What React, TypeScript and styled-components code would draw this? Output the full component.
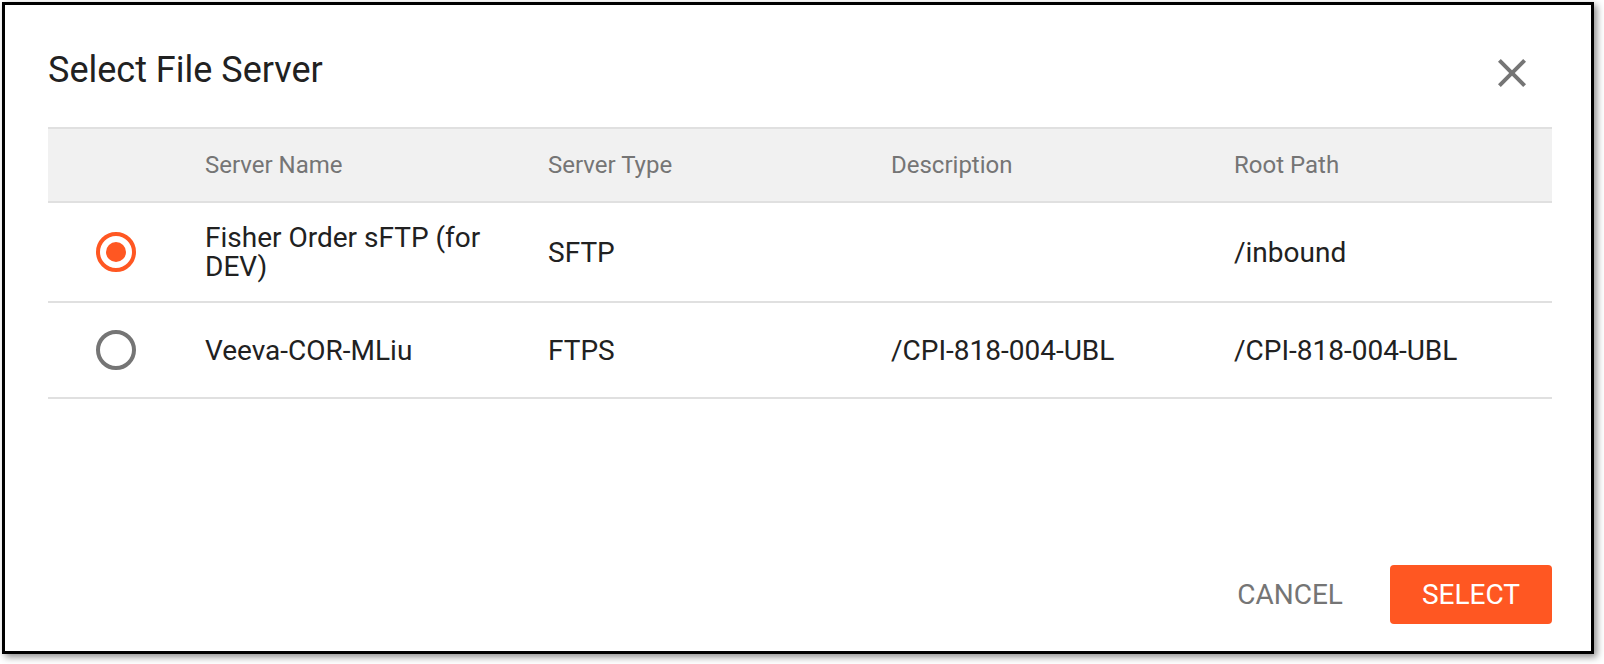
import { useState } from "react";
import styled, { createGlobalStyle } from "styled-components";
import { MdClose } from "react-icons/md";

interface FileServer {
  id: number;
  name: string;
  type: string;
  description: string;
  rootPath: string;
}

const servidores: FileServer[] = [
  { id: 1, name: "Fisher Order sFTP (for DEV)", type: "SFTP", description: "", rootPath: "/inbound" },
  { id: 2, name: "Veeva-COR-MLiu", type: "FTPS", description: "/CPI-818-004-UBL", rootPath: "/CPI-818-004-UBL" },
];

const colunas = "157px 343px 343px 343px 1fr";

export default function App() {
  const [selecionado, setSelecionado] = useState<number>(1);

  return (
    <>
      <EstiloGlobal />
      <Pagina>
        <Dialogo>
          <Cabecalho>
            <Titulo>Select File Server</Titulo>
            <BotaoFechar type="button" aria-label="Close">
              <MdClose size={48} />
            </BotaoFechar>
          </Cabecalho>
          <Tabela>
            <LinhaCabecalho>
              <Celula />
              <CelulaCabecalho>Server Name</CelulaCabecalho>
              <CelulaCabecalho>Server Type</CelulaCabecalho>
              <CelulaCabecalho>Description</CelulaCabecalho>
              <CelulaCabecalho>Root Path</CelulaCabecalho>
            </LinhaCabecalho>
            {servidores.map((item) => (
              <Linha key={item.id} onClick={() => setSelecionado(item.id)}>
                <CelulaRadio>
                  <Radio $ativo={selecionado === item.id} />
                </CelulaRadio>
                <Celula>{item.name}</Celula>
                <Celula>{item.type}</Celula>
                <Celula>{item.description}</Celula>
                <Celula>{item.rootPath}</Celula>
              </Linha>
            ))}
          </Tabela>
          <Rodape>
            <BotaoTexto type="button">Cancel</BotaoTexto>
            <BotaoPrimario type="button">Select</BotaoPrimario>
          </Rodape>
        </Dialogo>
      </Pagina>
    </>
  );
}

const EstiloGlobal = createGlobalStyle`
  body {
    margin: 0;
    background: #ffffff;
    font-family: Roboto, "Liberation Sans", sans-serif;
  }
`;

const Pagina = styled.div`
  padding: 2px 10px 10px 2px;
`;

const Dialogo = styled.div`
  box-sizing: border-box;
  width: 1592px;
  height: 652px;
  border: 3px solid #000000;
  background: #ffffff;
  box-shadow: 3px 3px 7px rgba(0, 0, 0, 0.45);
  padding: 44px 39px 27px 43px;
  display: flex;
  flex-direction: column;
`;

const Cabecalho = styled.div`
  display: flex;
  justify-content: space-between;
  align-items: flex-start;
`;

const Titulo = styled.h2`
  margin: 0;
  font-size: 36px;
  line-height: 42px;
  font-weight: 400;
  color: #212121;
`;

const BotaoFechar = styled.button`
  width: 48px;
  height: 48px;
  margin-right: 16px;
  padding: 0;
  border: none;
  background: transparent;
  color: #757575;
  display: flex;
  align-items: center;
  justify-content: center;
  cursor: pointer;
`;

const Tabela = styled.div`
  margin-top: 30px;
  border-top: 2px solid #e0e0e0;
`;

const LinhaCabecalho = styled.div`
  display: grid;
  grid-template-columns: ${colunas};
  align-items: center;
  height: 72px;
  background: #f1f1f1;
  border-bottom: 2px solid #e0e0e0;
`;

const Linha = styled.div`
  display: grid;
  grid-template-columns: ${colunas};
  align-items: center;
  min-height: 94px;
  border-bottom: 2px solid #e0e0e0;
  cursor: pointer;
`;

const Celula = styled.div`
  padding: 20px 32px 20px 0;
  font-size: 28px;
  line-height: 29px;
  color: #212121;
`;

const CelulaCabecalho = styled.div`
  padding-right: 32px;
  font-size: 24px;
  color: #757575;
`;

const CelulaRadio = styled.div`
  padding-left: 48px;
  display: flex;
  align-items: center;
`;

const Radio = styled.span<{ $ativo: boolean }>`
  box-sizing: border-box;
  width: 40px;
  height: 40px;
  border-radius: 50%;
  border: 4.5px solid ${(p) => (p.$ativo ? "#ff5722" : "#757575")};
  display: flex;
  align-items: center;
  justify-content: center;

  &::after {
    content: "";
    width: 20px;
    height: 20px;
    border-radius: 50%;
    background: #ff5722;
    display: ${(p) => (p.$ativo ? "block" : "none")};
  }
`;

const Rodape = styled.div`
  margin-top: auto;
  display: flex;
  justify-content: flex-end;
  align-items: center;
  gap: 15px;
`;

const BotaoBase = styled.button`
  height: 59px;
  padding: 0 32px;
  border: none;
  border-radius: 4px;
  font-family: Roboto, "Liberation Sans", sans-serif;
  font-size: 28px;
  font-weight: 400;
  text-transform: uppercase;
  cursor: pointer;
`;

const BotaoTexto = styled(BotaoBase)`
  background: transparent;
  color: #757575;
`;

const BotaoPrimario = styled(BotaoBase)`
  background: #ff5722;
  color: #ffffff;
`;
